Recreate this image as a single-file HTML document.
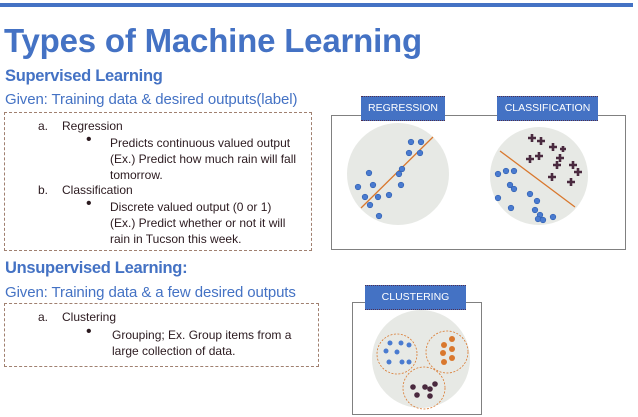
<!DOCTYPE html>
<html><head><meta charset="utf-8"><style>
body{margin:0;width:638px;height:417px;background:#fff;position:relative;overflow:hidden;font-family:"Liberation Sans",sans-serif}
.a{position:absolute;white-space:nowrap}
.blue{color:#4472c4}
.t{font-size:12px;color:#2b1a1f}
.b{font-size:16px;color:#2b1a1f}
.box{position:absolute;border:1px dashed #a08070}
.lab{position:absolute;background:#4472c4;color:#fff;font-size:10.5px;text-align:center;border-top:1px dotted #503050;border-bottom:1px dotted #503050}
.gbox{position:absolute;border:1.5px solid #808080}
</style></head><body>
<div class="a" style="left:0;top:3px;width:633px;height:4px;background:#4472c4"></div>
<div class="a blue" style="left:4px;top:22px;font-size:33px;font-weight:bold;letter-spacing:-0.2px">Types of Machine Learning</div>
<div class="a blue" style="left:5px;top:67px;font-size:16.5px;font-weight:bold;letter-spacing:-0.3px">Supervised Learning</div>
<div class="a blue" style="left:5px;top:91px;font-size:15px;letter-spacing:-0.1px">Given: Training data &amp; desired outputs(label)</div>
<div class="box" style="left:4px;top:112px;width:306px;height:137px"></div>
<div class="a t" style="left:38px;top:119px">a.</div><div class="a t" style="left:62px;top:119px">Regression</div>
<div class="a b" style="left:86px;top:131px">•</div>
<div class="a t" style="left:110px;top:135px;line-height:16px">Predicts continuous valued output<br>(Ex.) Predict how much rain will fall<br>tomorrow.</div>
<div class="a t" style="left:38px;top:183px">b.</div><div class="a t" style="left:62px;top:183px">Classification</div>
<div class="a b" style="left:86px;top:195px">•</div>
<div class="a t" style="left:110px;top:199px;line-height:16px">Discrete valued output (0 or 1)<br>(Ex.) Predict whether or not it will<br>rain in Tucson this week.</div>

<div class="a blue" style="left:5px;top:259px;font-size:16.5px;font-weight:bold;letter-spacing:-0.3px">Unsupervised Learning:</div>
<div class="a blue" style="left:5px;top:284px;font-size:15px;letter-spacing:-0.1px">Given: Training data &amp; a few desired outputs</div>
<div class="box" style="left:4px;top:303px;width:313px;height:62px"></div>
<div class="a t" style="left:38px;top:310px">a.</div><div class="a t" style="left:62px;top:310px">Clustering</div>
<div class="a b" style="left:86px;top:323px">•</div>
<div class="a t" style="left:112px;top:327px;line-height:16px">Grouping; Ex. Group items from a<br>large collection of data.</div>

<div class="gbox" style="left:331px;top:115px;width:293px;height:133px"></div>
<div class="lab" style="left:361px;top:96px;width:84px;height:23px;line-height:23px">REGRESSION</div>
<div class="lab" style="left:497px;top:96px;width:101px;height:23px;line-height:23px">CLASSIFICATION</div>
<svg class="a" style="left:331px;top:115px" width="294" height="134">
<circle cx="67" cy="59" r="51" fill="#e7e9e5"/>
<line x1="30" y1="93" x2="102" y2="22" stroke="#d9782e" stroke-width="1.3"/>
<g fill="#4a7bd0" stroke="#2f5fb0" stroke-width="0.6">
<circle cx="80" cy="27" r="2.8"/><circle cx="90" cy="27" r="2.8"/><circle cx="78" cy="38" r="2.8"/><circle cx="89" cy="38" r="2.8"/><circle cx="38" cy="58" r="2.8"/><circle cx="71" cy="54" r="2.8"/><circle cx="68" cy="59" r="2.8"/><circle cx="42" cy="70" r="2.8"/><circle cx="27" cy="72" r="2.8"/><circle cx="70" cy="70" r="2.8"/><circle cx="34" cy="82" r="2.8"/><circle cx="47" cy="82" r="2.8"/><circle cx="58" cy="80" r="2.8"/><circle cx="39" cy="90" r="2.8"/><circle cx="48" cy="101" r="2.8"/></g>
<circle cx="208" cy="61" r="49" fill="#e7e9e5"/>
<line x1="169" y1="36" x2="244" y2="92" stroke="#d9782e" stroke-width="1.3"/>
<g fill="#4a7bd0" stroke="#2f5fb0" stroke-width="0.6">
<circle cx="167" cy="59" r="2.8"/><circle cx="175" cy="56" r="2.8"/><circle cx="183" cy="56" r="2.8"/><circle cx="179" cy="70" r="2.8"/><circle cx="183" cy="74" r="2.8"/><circle cx="167" cy="83" r="2.8"/><circle cx="180" cy="93" r="2.8"/><circle cx="199" cy="79" r="2.8"/><circle cx="206" cy="86" r="2.8"/><circle cx="204" cy="95" r="2.8"/><circle cx="209" cy="100" r="2.8"/><circle cx="207" cy="104" r="2.8"/><circle cx="212" cy="105" r="2.8"/><circle cx="222" cy="102" r="2.8"/></g>
<g stroke="#4a2a3f" stroke-width="2.6"><path d="M197 23h8M201 19v8M206 26h8M210 22v8M218 32h8M222 28v8M225 43h8M229 39v8M195 44h8M199 40v8M204 41h8M208 37v8M222 50h8M226 46v8M238 50h8M242 46v8M243 57h8M247 53v8M217 62h8M221 58v8M236 67h8M240 63v8M229 34h6M232 31v6M245 57h6"/></g>
</svg>

<div class="gbox" style="left:352px;top:302px;width:128px;height:111px"></div>
<div class="lab" style="left:365px;top:285px;width:101px;height:23px;line-height:23px">CLUSTERING</div>
<svg class="a" style="left:352px;top:302px" width="130" height="112">
<circle cx="69" cy="57" r="49" fill="#e7e9e5"/>
<g fill="none" stroke="#d9782e" stroke-width="0.8" stroke-dasharray="2,1.5"><circle cx="45" cy="52" r="20"/><circle cx="95" cy="50" r="21"/><circle cx="72" cy="86" r="21"/></g>
<g fill="#4a7bd0"><circle cx="38" cy="41" r="2.5"/><circle cx="49" cy="41" r="2.5"/><circle cx="57" cy="43" r="2.5"/><circle cx="34" cy="49" r="2.5"/><circle cx="45" cy="50" r="2.5"/><circle cx="37" cy="60" r="2.5"/><circle cx="50" cy="60" r="2.5"/><circle cx="57" cy="60" r="2.5"/></g>
<g fill="#d9782e"><circle cx="92" cy="43" r="3"/><circle cx="100" cy="37" r="3"/><circle cx="91" cy="51" r="3"/><circle cx="100" cy="47" r="3"/><circle cx="100" cy="56" r="3"/><circle cx="92" cy="60" r="3"/></g>
<g fill="#4a2a3f"><circle cx="61" cy="85" r="2.8"/><circle cx="73" cy="85" r="2.8"/><circle cx="78" cy="87" r="2.8"/><circle cx="83" cy="82" r="2.8"/><circle cx="65" cy="93" r="2.8"/><circle cx="78" cy="94" r="2.8"/></g>
</svg>
</body></html>
